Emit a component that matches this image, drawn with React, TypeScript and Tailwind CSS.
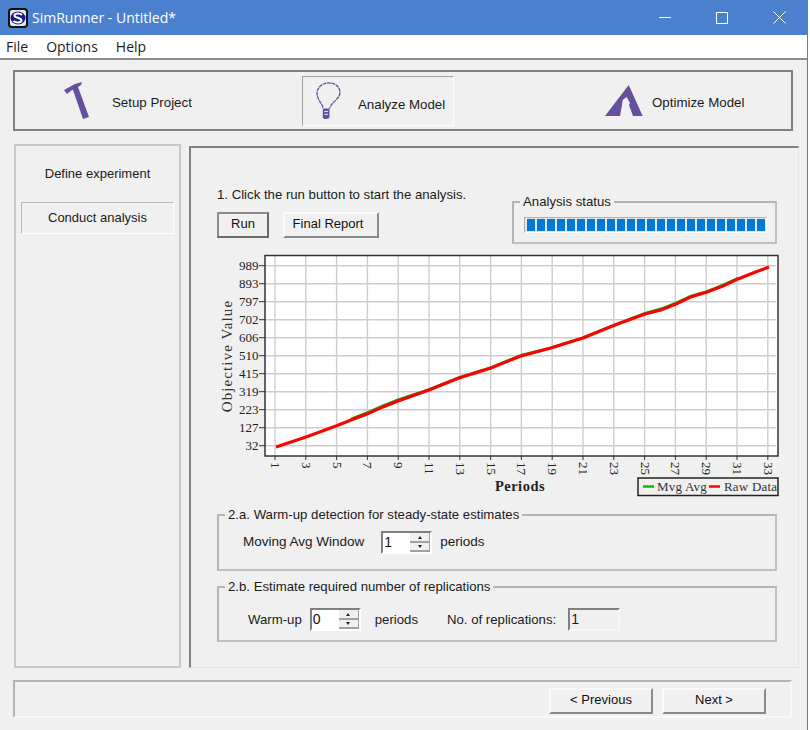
import type { ReactElement, ReactNode } from 'react';

const UI_FONT = "font-['Liberation_Sans',Arial,sans-serif]";

const Y_TICKS = ['989', '893', '797', '702', '606', '510', '415', '319', '223', '127', '32'];
const X_TICKS = ['1', '3', '5', '7', '9', '11', '13', '15', '17', '19', '21', '23', '25', '27', '29', '31', '33'];
const SEGMENTS = Array.from({ length: 24 }, (_, i) => i);

const RAW_LINE =
  '275,448 305,438 335,427 350,421 366,415 382,408 397,402 428,391 458,379 490,369 520,357 550,349 582,339 614,326 644,315 660,311 675,305 690,298 706,293 722,287 737,280 752,274 768,268';
const AVG_LINE =
  '350,420 366,413.6 382,406.6 397,400.8 428,390.4 458,378.4 490,368.4 520,356.2 550,348.6 582,338.6 614,325.6 644,314.2 660,309.8 675,303.8 690,297 706,292.4 722,286 737,279.2';

function SimLogo(): ReactElement {
  return (
    <svg width="20" height="20" viewBox="0 0 20 20" aria-hidden="true">
      <rect x="1" y="1" width="18" height="18" rx="3" fill="#e8e8f0" stroke="#111" strokeWidth="2" />
      <ellipse cx="10" cy="10" rx="7.5" ry="6.5" fill="#17178a" />
      <path d="M14 7 C12 5 7 5 6.5 7.5 C6 10 14 9.5 13.5 12.5 C13 15 8 15 5.5 13" fill="none" stroke="#fff" strokeWidth="2" />
    </svg>
  );
}

function HammerIcon(): ReactElement {
  return (
    <svg width="30" height="40" viewBox="0 0 30 40" aria-hidden="true">
      <path d="M2 9 L5 13 L10 9 L11 9 L21 38 L27 36 L16 6 L19 4 L20 1 L13 3 Z" fill="#66509c" />
    </svg>
  );
}

function BulbIcon(): ReactElement {
  return (
    <svg width="27" height="40" viewBox="0 0 28 42" aria-hidden="true">
      <path
        d="M8 28 C8 24 2 20 2 13 C2 6 8 2 14 2 C21 2 26 6 26 12 C26 19 17 22 15 29"
        fill="none"
        stroke="#66509c"
        strokeWidth="1.4"
        strokeDasharray="4 0.7"
      />
      <path d="M8 29 H15 V39 H13 V40 H9 V39 H8 Z" fill="#66509c" />
      <path d="M9.5 32 H13.5 M9.5 35 H13.5" stroke="#efefef" strokeWidth="1" />
    </svg>
  );
}

function OptimizeIcon(): ReactElement {
  return (
    <svg width="40" height="34" viewBox="0 0 40 34" aria-hidden="true">
      <path d="M24.7 1 L1 32 H16 L18 21 L18.6 16 L22.6 13 L26 19 L25 21 L29 32 H38.7 Z" fill="#66509c" />
    </svg>
  );
}

function ToolbarItem({ label, icon, selected, className, labelClass }: {
  label: string;
  icon: ReactNode;
  selected?: boolean;
  className: string;
  labelClass: string;
}): ReactElement {
  return (
    <div
      className={`flex h-[50px] items-center ${className} ${
        selected ? 'border border-b-white border-l-[#a0a0a0] border-r-white border-t-[#a0a0a0]' : ''
      }`}
    >
      {icon}
      <span className={`text-[13.3px] text-[#1a1a1a] ${labelClass}`}>{label}</span>
    </div>
  );
}

function Button({ label, className, focused }: { label: string; className: string; focused?: boolean }): ReactElement {
  return (
    <button
      type="button"
      className={`pb-[2px] text-[13px] text-[#111] ${className} ${
        focused
          ? 'border-2 border-b-[#6a6a6a] border-l-[#8a8a8a] border-r-[#6a6a6a] border-t-[#8a8a8a] bg-[#f0f0f0]'
          : 'border-2 border-b-[#8a8a8a] border-l-[#fafafa] border-r-[#8a8a8a] border-t-[#fafafa] bg-[#f0f0f0]'
      }`}
    >
      {label}
    </button>
  );
}

function Spinner({ value, className }: { value: string; className: string }): ReactElement {
  return (
    <div className={`flex h-[23px] w-[51px] border-2 border-b-white border-l-[#808080] border-r-white border-t-[#808080] bg-white ${className}`}>
      <span className="flex-1 pl-[1px] text-[14px] leading-[18px] text-[#111]">{value}</span>
      <div className="flex w-[20px] flex-col border-r border-[#a0a0a0]">
        <div className="flex h-[10px] items-center justify-center border-b-2 border-[#a0a0a0] bg-[#f0f0f0]">
          <span className="h-0 w-0 border-x-[2.5px] border-b-[3px] border-x-transparent border-b-[#222]" />
        </div>
        <div className="flex h-[9px] items-center justify-center border-b-2 border-[#a0a0a0] bg-[#f0f0f0]">
          <span className="h-0 w-0 border-x-[2.5px] border-t-[3px] border-x-transparent border-t-[#222]" />
        </div>
      </div>
    </div>
  );
}

function GroupBox({ title, className, children }: { title: string; className: string; children: ReactNode }): ReactElement {
  return (
    <fieldset className={`border-2 border-b-[#c0c0c0] border-l-[#b4b4b4] border-r-[#c0c0c0] border-t-[#b4b4b4] ${className}`}>
      <legend className="ml-[6px] px-[3px] text-[13.2px] leading-[14px] text-[#1a1a1a]">{title}</legend>
      {children}
    </fieldset>
  );
}

function ResultsChart(): ReactElement {
  const serif = "'Liberation Serif', 'Times New Roman', serif";
  return (
    <svg width="564" height="245" viewBox="216 255 564 245" className="block" fontFamily={serif} aria-label="Objective value by period">
      <rect x="264" y="256.5" width="513" height="200.5" fill="#fff" />
      {Y_TICKS.map((tick, i) => {
        const y = 266.7 + i * 18;
        return (
          <g key={tick}>
            <line x1="264" x2="775" y1={y} y2={y} stroke="#cdcdcd" strokeWidth="1.4" />
            <line x1="258" x2="264" y1={y} y2={y} stroke="#333" strokeWidth="1" />
            <text x="257.5" y={y + 4} textAnchor="end" fontSize="13" fill="#222">{tick}</text>
          </g>
        );
      })}
      {X_TICKS.map((tick, i) => {
        const x = 274 + i * 30.8;
        return (
          <g key={tick}>
            <line x1={x} x2={x} y1="257" y2="457" stroke="#cdcdcd" strokeWidth="1.4" />
            <line x1={x} x2={x} y1="457" y2="461" stroke="#333" strokeWidth="1" />
            <text transform={`translate(${x - 4} 463) rotate(90)`} fontSize="13" fill="#222">{tick}</text>
          </g>
        );
      })}
      <rect x="264" y="256.5" width="513" height="200.5" fill="none" stroke="#333" strokeWidth="1.5" />
      <polyline points={AVG_LINE} fill="none" stroke="#18a018" strokeWidth="2.5" />
      <polyline points={RAW_LINE} fill="none" stroke="#ff0000" strokeWidth="3" />
      <text transform="translate(231 357) rotate(-90)" textAnchor="middle" fontSize="15" letterSpacing="1.1" fill="#333">Objective Value</text>
      <text x="519" y="492" textAnchor="middle" fontSize="14.5" fontWeight="700" letterSpacing="0.5" fill="#222">Periods</text>
      <rect x="637" y="479" width="140" height="17.5" fill="#f0f0f0" stroke="#222" strokeWidth="1.5" />
      <line x1="642" x2="653" y1="487.5" y2="487.5" stroke="#00c000" strokeWidth="2.5" />
      <text x="656" y="492" fontSize="13" letterSpacing="0.2" fill="#333">Mvg Avg</text>
      <line x1="708" x2="719" y1="487.5" y2="487.5" stroke="#ff0000" strokeWidth="2.5" />
      <text x="723" y="492" fontSize="13" letterSpacing="0.2" fill="#333">Raw Data</text>
    </svg>
  );
}

export default function App(): ReactElement {
  return (
    <div className={`flex h-[730px] w-[810px] overflow-hidden bg-white ${UI_FONT}`}>
      <div className="flex h-full w-[808px] flex-col border-r border-[#4a80cd] bg-[#f0f0f0]">
        {/* Title bar */}
        <header className="flex h-[35px] shrink-0 items-center bg-[#4a80cd] pl-[8px] text-white">
          <SimLogo />
          <span className="ml-[4px] font-['Open_Sans',sans-serif] text-[14px]">SimRunner - Untitled*</span>
          <div className="ml-auto flex items-center">
            <span className="h-px w-[12px] bg-white" />
            <span className="ml-[45px] h-[12px] w-[12px] border border-white" />
            <svg className="ml-[45px] mr-[21px]" width="13" height="13" viewBox="0 0 13 13" aria-hidden="true">
              <path d="M0.5 0.5 L12.5 12.5 M12.5 0.5 L0.5 12.5" stroke="#fff" strokeWidth="1" />
            </svg>
          </div>
        </header>

        {/* Menu */}
        <nav className="flex h-[25px] shrink-0 items-center gap-[18px] border-b-2 border-[#8c8c8c] bg-white pl-[6px] font-['Open_Sans',sans-serif] text-[14px] text-[#1a1a1a]">
          <span>File</span>
          <span>Options</span>
          <span>Help</span>
        </nav>

        {/* Module toolbar */}
        <div className="ml-[13px] mt-[10px] flex h-[61px] w-[780px] shrink-0 items-center border-2 border-[#808080] pt-[1px]">
          <ToolbarItem label="Setup Project" labelClass="pt-[3px]" icon={<HammerIcon />} className="ml-[47px] w-[150px] gap-[20px]" />
          <ToolbarItem label="Analyze Model" labelClass="pt-[7px]" icon={<BulbIcon />} selected className="ml-[90px] w-[152px] gap-[16px] pl-[12px]" />
          <ToolbarItem label="Optimize Model" labelClass="pt-[3px]" icon={<OptimizeIcon />} className="ml-[150px] gap-[8px]" />
        </div>

        <div className="ml-[14px] mt-[13px] flex h-[524px] shrink-0 items-start gap-[8px]">
          {/* Steps */}
          <aside className="h-full w-[167px] border-2 border-[#c8c8c8] text-[13px] text-[#1a1a1a]">
            <div className="mt-[18px] text-center">Define experiment</div>
            <div className="mx-[5px] mt-[18px] flex h-[32px] items-center justify-center border border-b-white border-l-[#b8b8b8] border-r-white border-t-[#b8b8b8]">
              Conduct analysis
            </div>
          </aside>

          {/* Analysis panel */}
          <main className="mt-[2px] h-[522px] w-[610px] border-b border-l-2 border-r border-t-2 border-b-[#e4e4e4] border-l-[#808080] border-r-[#e4e4e4] border-t-[#808080] pl-[26px] text-[#1a1a1a]">
            <div className="flex w-[560px] justify-between">
              <div className="pt-[39px]">
                <p className="text-[13.2px] leading-[16px]">1. Click the run button to start the analysis.</p>
                <div className="mt-[9px] flex gap-[14px]">
                  <Button label="Run" focused className="h-[26px] w-[52px]" />
                  <Button label="Final Report" className="h-[26px] w-[96px] pr-[6px]" />
                </div>
              </div>
              <GroupBox title="Analysis status" className="mt-[47px] h-[49px] w-[265px]">
                <div className="ml-[10px] mt-[8px] flex h-[16px] w-[243px] items-center gap-[2px] border border-b-white border-l-[#b0b0b0] border-r-white border-t-[#b0b0b0] bg-[#e6e6e6] pl-[2px]">
                  {SEGMENTS.map((i) => (
                    <span key={i} className="h-[12px] w-[8px] bg-[#0078d7]" />
                  ))}
                </div>
              </GroupBox>
            </div>

            <div className="mt-[10px]">
              <ResultsChart />
            </div>

            <GroupBox title="2.a. Warm-up detection for steady-state estimates" className="mt-[9px] h-[63px] w-[560px]">
              <div className="flex items-center pl-[24px] pt-[9px] text-[13.5px]">
                <span>Moving Avg Window</span>
                <Spinner value="1" className="ml-[17px]" />
                <span className="ml-[8px]">periods</span>
              </div>
            </GroupBox>

            <GroupBox title="2.b. Estimate required number of replications" className="mt-[9px] h-[62px] w-[560px]">
              <div className="flex items-center pl-[29px] pt-[14px] text-[13.2px]">
                <span>Warm-up</span>
                <Spinner value="0" className="ml-[8px]" />
                <span className="ml-[14px]">periods</span>
                <span className="ml-[29px]">No. of replications:</span>
                <span className="ml-[12px] h-[23px] w-[52px] border-2 border-b-[#f8f8f8] border-l-[#808080] border-r-[#f8f8f8] border-t-[#808080] bg-[#f0f0f0] pl-[1px] text-[14px] leading-[18px]">1</span>
              </div>
            </GroupBox>
          </main>
        </div>

        {/* Navigation */}
        <footer className="ml-[13px] mt-[12px] flex h-[38px] w-[779px] shrink-0 items-center justify-end gap-[9px] border-2 border-b-[#f8f8f8] border-l-[#b4b4b4] border-r-[#f8f8f8] border-t-[#b4b4b4] pr-[24px] pt-[3px]">
          <Button label="< Previous" className="h-[26px] w-[104px]" />
          <Button label="Next >" className="h-[26px] w-[104px]" />
        </footer>
      </div>
    </div>
  );
}
